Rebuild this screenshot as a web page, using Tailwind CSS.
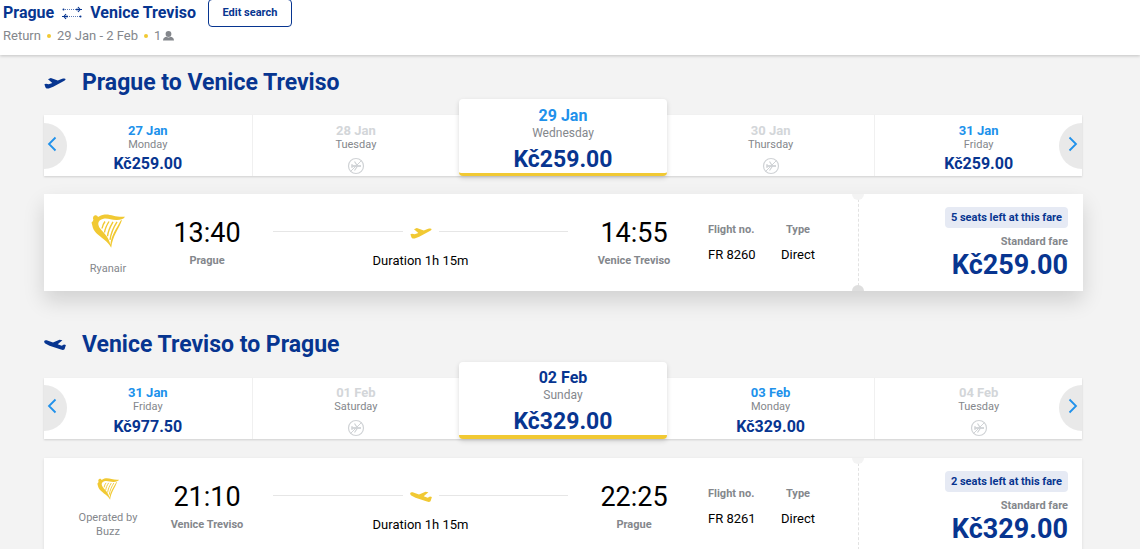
<!DOCTYPE html>
<html lang="en">
<head>
  <meta charset="UTF-8" />
  <meta name="viewport" content="width=device-width, initial-scale=1.0"/>
  <title>Select flights</title>
  <script src="https://cdn.jsdelivr.net/npm/@tailwindcss/browser@4"></script>
</head>
<body class="font-['Roboto',sans-serif] bg-[#f3f3f3] text-black min-h-screen overflow-x-hidden">

  <!-- Shared icons -->
  <svg class="hidden">
    <symbol id="takeoff" viewBox="0 0 22 12">
      <path d="M.4 7.300 2 6.700l2.700.6 3.600-1.300L4 2.200 6.800 1.100l7 2.300 4.400-1.600c1.700-.6 3.100-.5 3.300.3.200.9-.8 1.700-2.100 2.200L9.200 9.700l-4.500 1.700c-1.700.5-2.800.1-3.300-1.200z"/>
    </symbol>
    <symbol id="landing" viewBox="0 0 22 12">
      <path d="M.2 2.300C.6 1.200 2 1.100 4 1.800l5 1.700 6.500-2.700 2.900.4-4.700 4 4 1.500 2.300-1.200 1.900.5-1.200 3.700c-.5 1.400-2 1.400-3.700.8L5.500 6.700 1.700 4.700C.6 4.100 0 3.100.2 2.300z"/>
    </symbol>
    <symbol id="harp" viewBox="0 0 34 34">
      <path d="M.5 8.500C1.600 8 2 7 2.400 5.800 1.600 4.500 2 2 3.600 1.400c1.500-.6 3.200.3 3.400 1.700C9 2 10.500.8 13.500.5 20-.2 25 3.700 34 2.700c-1.200 2.300-4.500 3.200-8 3.300-5.500.2-9-2-13.500-1.200C9 5.500 7 7.500 7.300 10.200c.5 4.500 5.500 7.500 8.700 12.500 1.700 2.700 2.800 5.300 3.400 8 .8-9.500 6-16 10.300-24.200l1.300-.4C28 15 21.500 22 20.200 33.800c-1.700-3.500-3.800-5.500-7.200-8.300C7 20.500 2.100 17.500 1.300 11.500z"/>
      <path d="M14 7.500c-1.500 2-2.500 4-3 7M18 7.500c-2.500 4-4 7-4.500 11M22 7.800c-3 5-5 9.500-5.500 14.500M26 7.800c-3.500 5.500-6 11-7 18" fill="none" stroke="currentColor" stroke-width="1.400"/>
    </symbol>
    <symbol id="noflight" viewBox="0 0 18 18">
      <g fill="none" stroke="currentColor">
        <circle cx="9" cy="9" r="7.500" stroke-width="1.200"/>
        <path d="M3.500 14.500 14.500 3.500" stroke-width="1"/>
        <path d="M4.500 9h9.500" stroke-width="1.800"/>
        <path d="M7.500 4.500 10.500 9l-3 4.500M5 7v4" stroke-width="1.200"/>
      </g>
    </symbol>
    <symbol id="chevron" viewBox="0 0 10 16">
      <path d="M8.500 1.500 2 8l6.500 6.500" fill="none" stroke="currentColor" stroke-width="1.800"/>
    </symbol>
  </svg>

  <!-- Trip summary -->
  <header class="bg-white h-[55px] shadow-[0_1px_3px_rgba(0,0,0,0.2)] px-[3px]">
    <div class="flex items-start text-[#073590]">
      <div class="flex items-center text-base font-bold h-[26px]">
        <span>Prague</span>
        <svg class="w-5 h-[14px] mx-2" viewBox="0 0 20 14" fill="none" stroke="currentColor">
          <path d="M1 3.500h14M5 10.500h14" stroke-width="1" stroke-dasharray="1 1" opacity=".65"/>
          <path d="M14 3.500h6M16 1l2 2.500L16 6M15 2.500v2M0 10.500h6M4 8l-2 2.500L4 13M5 9.500v2" stroke-width="1.200"/>
          <circle cx="1.500" cy="3.500" r="1" fill="currentColor" stroke="none"/>
          <circle cx="18.500" cy="10.500" r="1" fill="currentColor" stroke="none"/>
        </svg>
        <span>Venice Treviso</span>
      </div>
      <button type="button" class="ml-3 -mt-px w-[84px] h-7 border border-[#073590] rounded text-[11px] font-bold">Edit search</button>
    </div>
    <div class="flex items-center h-[18px] text-[13px] text-[#84878c]">
      <span>Return</span>
      <span class="size-1 rounded-full bg-[#f1c933] mx-[6px]"></span>
      <span>29 Jan - 2 Feb</span>
      <span class="size-1 rounded-full bg-[#f1c933] mx-[6px]"></span>
      <span>1</span>
      <svg class="w-[11px] h-[10px] ml-[2px]" viewBox="0 0 11 10" fill="currentColor">
        <circle cx="5.500" cy="3" r="2.900"/>
        <path d="M0 9.500C0 7 2 6 3.500 5.800c1.200.8 2.800.8 4 0C9 6 11 7 11 9.500z"/>
      </svg>
    </div>
  </header>

  <main class="ml-11 mr-[57px] pt-3">

    <!-- Outbound -->
    <section>
      <h2 class="flex items-center h-8 text-[23px] font-bold text-[#073590]">
        <svg class="w-[22px] h-3 mr-4 fill-current"><use href="#takeoff"/></svg>
        Prague to Venice Treviso
      </h2>
      <div class="relative mt-4 mr-px h-[61px] grid grid-cols-5 bg-white shadow-[0_1px_2px_rgba(0,0,0,0.15)] text-center text-[#84878c]">
        <button type="button" class="flex flex-col items-center pt-2">
          <span class="text-[13px] leading-4 font-bold text-[#2091eb]">27 Jan</span>
          <span class="text-[11px] leading-3">Monday</span>
          <span class="mt-[2px] text-base leading-[22px] font-bold text-[#073590]">Kč259.00</span>
        </button>
        <button type="button" disabled class="flex flex-col items-center pt-2 border-l border-[#f0f0f0]">
          <span class="text-[13px] leading-4 font-bold text-[#d3d6d9]">28 Jan</span>
          <span class="text-[11px] leading-3">Tuesday</span>
          <svg class="size-[18px] mt-[6px] text-[#d0d3d6]"><use href="#noflight"/></svg>
        </button>
        <button type="button" class="flex flex-col items-center -mt-4 pt-2 bg-white rounded-sm border-b-3 border-[#f1c933] shadow-[0_2px_5px_rgba(0,0,0,0.15)]">
          <span class="text-base leading-[18px] font-bold text-[#2091eb]">29 Jan</span>
          <span class="text-xs leading-4">Wednesday</span>
          <span class="mt-[6px] text-[23px] leading-[26px] font-bold text-[#073590]">Kč259.00</span>
        </button>
        <button type="button" disabled class="flex flex-col items-center pt-2">
          <span class="text-[13px] leading-4 font-bold text-[#d3d6d9]">30 Jan</span>
          <span class="text-[11px] leading-3">Thursday</span>
          <svg class="size-[18px] mt-[6px] text-[#d0d3d6]"><use href="#noflight"/></svg>
        </button>
        <button type="button" class="flex flex-col items-center pt-2 border-l border-[#f0f0f0]">
          <span class="text-[13px] leading-4 font-bold text-[#2091eb]">31 Jan</span>
          <span class="text-[11px] leading-3">Friday</span>
          <span class="mt-[2px] text-base leading-[22px] font-bold text-[#073590]">Kč259.00</span>
        </button>
        <button type="button" aria-label="Earlier dates" class="absolute left-0 top-2 w-[23px] h-[46px] rounded-r-full bg-[#e9e9e9] text-[#2091eb]">
          <svg class="w-[10px] h-4 ml-[3px] -mt-1"><use href="#chevron"/></svg>
        </button>
        <button type="button" aria-label="Later dates" class="absolute right-0 top-2 w-[23px] h-[46px] rounded-l-full bg-[#e9e9e9] text-[#2091eb]">
          <svg class="w-[10px] h-4 ml-[9px] -mt-1 rotate-180"><use href="#chevron"/></svg>
        </button>
      </div>

      <article class="mt-[18px] h-[97px] flex bg-white shadow-[0_10px_20px_rgba(0,0,0,0.14)]">
        <div class="ml-5 w-[88px] flex flex-col items-center pt-5 text-[11px]">
          <svg class="size-[34px] fill-current text-[#f1c933]"><use href="#harp"/></svg>
          <span class="mt-[13px] leading-4 text-[#84878c]">Ryanair</span>
        </div>
        <div class="w-[110px] text-center pt-[23px]">
          <div class="text-[27px] leading-8">13:40</div>
          <div class="mt-1 text-[11px] leading-4 font-bold text-[#84878c]">Prague</div>
        </div>
        <div class="mx-[11px] flex-1 pt-[29px] text-center">
          <div class="h-4 flex items-center gap-[7px]">
            <span class="flex-1 h-px bg-[#e6e6e6]"></span>
            <svg class="w-[22px] h-3 mt-1 fill-[#f1c933]"><use href="#takeoff"/></svg>
            <span class="flex-1 h-px bg-[#e6e6e6]"></span>
          </div>
          <div class="mt-[14px] text-[13px] leading-4">Duration 1h 15m</div>
        </div>
        <div class="w-[110px] text-center pt-[23px]">
          <div class="text-[27px] leading-8">14:55</div>
          <div class="mt-1 text-[11px] leading-4 font-bold text-[#84878c]">Venice Treviso</div>
        </div>
        <dl class="w-[79px] pl-[19px] pt-7">
          <dt class="text-[11px] leading-4 font-bold text-[#84878c]">Flight no.</dt>
          <dd class="mt-[9px] text-[13px] leading-4">FR 8260</dd>
        </dl>
        <dl class="w-[60px] text-center pt-7 mr-[30px]">
          <dt class="text-[11px] leading-4 font-bold text-[#84878c]">Type</dt>
          <dd class="mt-[9px] text-[13px] leading-4">Direct</dd>
        </dl>
        <div class="relative w-[225px] border-l border-dashed border-[#e2e2e2] pr-[15px] pt-[13px] flex flex-col items-end text-[#073590] font-bold">
          <span class="absolute -left-[7px] top-0 w-3 h-[6px] rounded-b-full bg-[#f3f3f3]"></span>
          <span class="absolute -left-[7px] bottom-0 w-3 h-[6px] rounded-t-full bg-[#dedede]"></span>
          <span class="bg-[#e6eaf4] rounded-sm px-[6px] text-[11px] leading-[21px]">5 seats left at this fare</span>
          <span class="mt-[6px] text-[11px] leading-4 text-[#84878c]">Standard fare</span>
          <span class="text-[27px] leading-[30px]">Kč259.00</span>
        </div>
      </article>
    </section>

    <!-- Inbound -->
    <section class="mt-[38px]">
      <h2 class="flex items-center h-8 text-[23px] font-bold text-[#073590]">
        <svg class="w-[22px] h-3 mr-4 fill-current"><use href="#landing"/></svg>
        Venice Treviso to Prague
      </h2>
      <div class="relative mt-[17px] mr-px h-[61px] grid grid-cols-5 bg-white shadow-[0_1px_2px_rgba(0,0,0,0.15)] text-center text-[#84878c]">
        <button type="button" class="flex flex-col items-center pt-[7px]">
          <span class="text-[13px] leading-4 font-bold text-[#2091eb]">31 Jan</span>
          <span class="text-[11px] leading-3">Friday</span>
          <span class="mt-[3px] text-base leading-[22px] font-bold text-[#073590]">Kč977.50</span>
        </button>
        <button type="button" disabled class="flex flex-col items-center pt-[7px] border-l border-[#f0f0f0]">
          <span class="text-[13px] leading-4 font-bold text-[#d3d6d9]">01 Feb</span>
          <span class="text-[11px] leading-3">Saturday</span>
          <svg class="size-[18px] mt-[6px] text-[#d0d3d6]"><use href="#noflight"/></svg>
        </button>
        <button type="button" class="flex flex-col items-center -mt-4 pt-[7px] bg-white rounded-sm border-b-4 border-[#f1c933] shadow-[0_2px_5px_rgba(0,0,0,0.15)]">
          <span class="text-base leading-[18px] font-bold text-[#073590]">02 Feb</span>
          <span class="text-xs leading-4">Sunday</span>
          <span class="mt-[6px] text-[23px] leading-[26px] font-bold text-[#073590]">Kč329.00</span>
        </button>
        <button type="button" class="flex flex-col items-center pt-[7px]">
          <span class="text-[13px] leading-4 font-bold text-[#2091eb]">03 Feb</span>
          <span class="text-[11px] leading-3">Monday</span>
          <span class="mt-[3px] text-base leading-[22px] font-bold text-[#073590]">Kč329.00</span>
        </button>
        <button type="button" disabled class="flex flex-col items-center pt-[7px] border-l border-[#f0f0f0]">
          <span class="text-[13px] leading-4 font-bold text-[#d3d6d9]">04 Feb</span>
          <span class="text-[11px] leading-3">Tuesday</span>
          <svg class="size-[18px] mt-[6px] text-[#d0d3d6]"><use href="#noflight"/></svg>
        </button>
        <button type="button" aria-label="Earlier dates" class="absolute left-0 top-[7px] w-[23px] h-[46px] rounded-r-full bg-[#e9e9e9] text-[#2091eb]">
          <svg class="w-[10px] h-4 ml-[3px] -mt-1"><use href="#chevron"/></svg>
        </button>
        <button type="button" aria-label="Later dates" class="absolute right-0 top-[7px] w-[23px] h-[46px] rounded-l-full bg-[#e9e9e9] text-[#2091eb]">
          <svg class="w-[10px] h-4 ml-[9px] -mt-1 rotate-180"><use href="#chevron"/></svg>
        </button>
      </div>

      <article class="mt-[19px] mr-px h-[97px] flex bg-white shadow-[0_1px_3px_rgba(0,0,0,0.1)]">
        <div class="ml-5 w-[88px] flex flex-col items-center pt-5 text-[11px] text-center">
          <svg class="size-[22px] fill-current text-[#f1c933]"><use href="#harp"/></svg>
          <span class="mt-[11px] leading-[14px] text-[#84878c]">Operated by<br>Buzz</span>
        </div>
        <div class="w-[110px] text-center pt-[23px]">
          <div class="text-[27px] leading-8">21:10</div>
          <div class="mt-1 text-[11px] leading-4 font-bold text-[#84878c]">Venice Treviso</div>
        </div>
        <div class="mx-[11px] flex-1 pt-[29px] text-center">
          <div class="h-4 flex items-center gap-[7px]">
            <span class="flex-1 h-px bg-[#e6e6e6]"></span>
            <svg class="w-[22px] h-3 mt-1 fill-[#f1c933]"><use href="#landing"/></svg>
            <span class="flex-1 h-px bg-[#e6e6e6]"></span>
          </div>
          <div class="mt-[14px] text-[13px] leading-4">Duration 1h 15m</div>
        </div>
        <div class="w-[110px] text-center pt-[23px]">
          <div class="text-[27px] leading-8">22:25</div>
          <div class="mt-1 text-[11px] leading-4 font-bold text-[#84878c]">Prague</div>
        </div>
        <dl class="w-[79px] pl-[19px] pt-7">
          <dt class="text-[11px] leading-4 font-bold text-[#84878c]">Flight no.</dt>
          <dd class="mt-[9px] text-[13px] leading-4">FR 8261</dd>
        </dl>
        <dl class="w-[60px] text-center pt-7 mr-[30px]">
          <dt class="text-[11px] leading-4 font-bold text-[#84878c]">Type</dt>
          <dd class="mt-[9px] text-[13px] leading-4">Direct</dd>
        </dl>
        <div class="relative w-[224px] border-l border-dashed border-[#e2e2e2] pr-[14px] pt-[13px] flex flex-col items-end text-[#073590] font-bold">
          <span class="absolute -left-[7px] top-0 w-3 h-[6px] rounded-b-full bg-[#f3f3f3]"></span>
          <span class="absolute -left-[7px] bottom-0 w-3 h-[6px] rounded-t-full bg-[#f3f3f3]"></span>
          <span class="bg-[#e6eaf4] rounded-sm px-[6px] text-[11px] leading-[21px]">2 seats left at this fare</span>
          <span class="mt-[6px] text-[11px] leading-4 text-[#84878c]">Standard fare</span>
          <span class="text-[27px] leading-[30px]">Kč329.00</span>
        </div>
      </article>
    </section>
  </main>
</body>
</html>
